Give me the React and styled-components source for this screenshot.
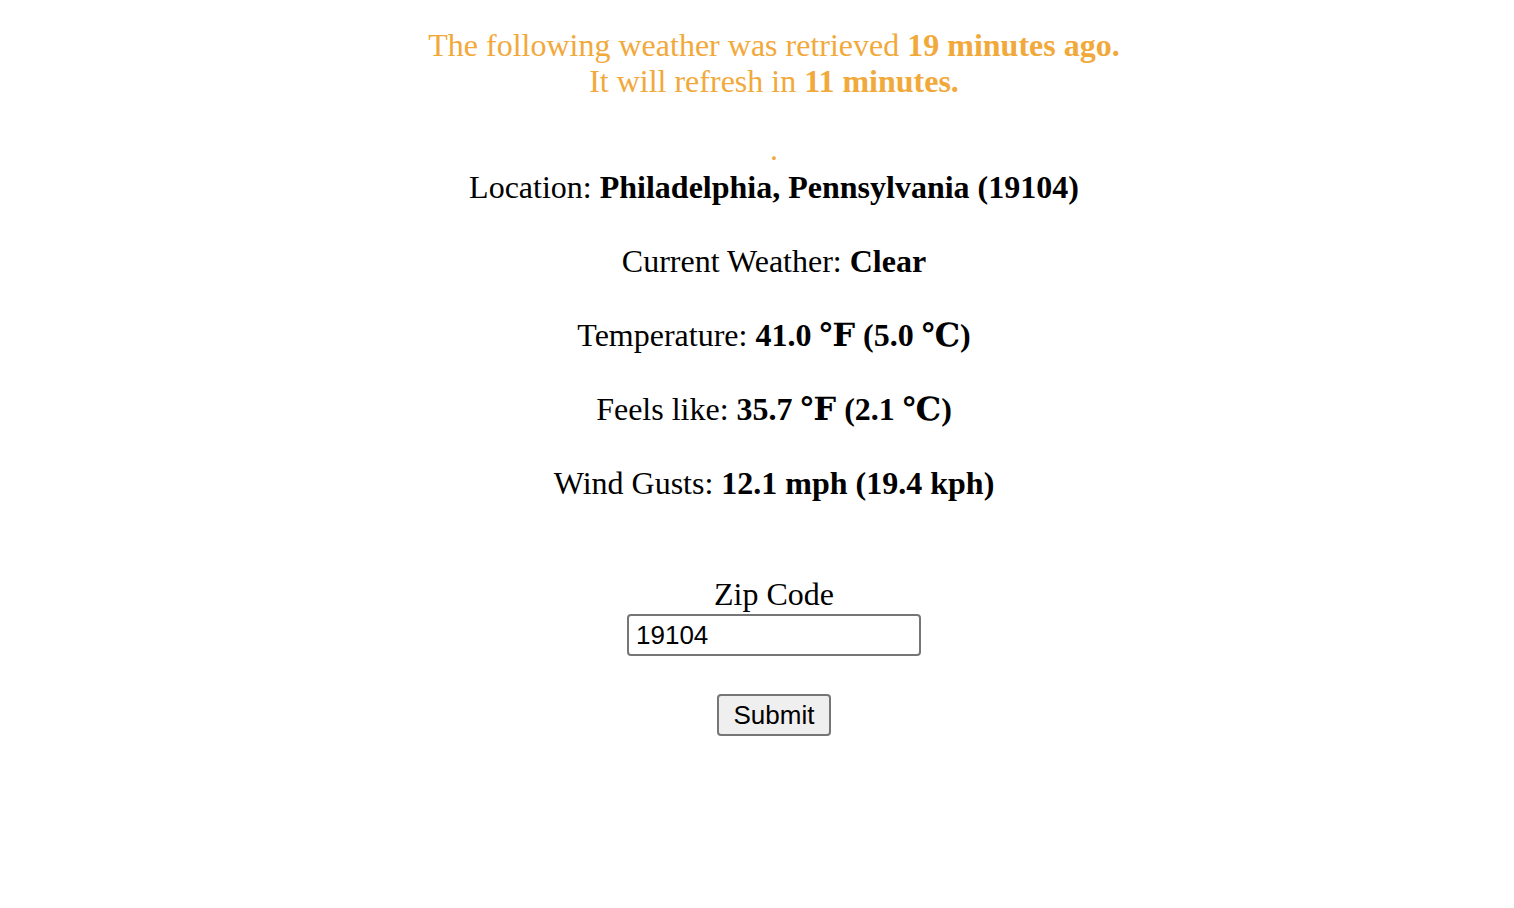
import React from 'react';
import styled, { createGlobalStyle } from 'styled-components';

const GlobalStyle = createGlobalStyle`
   body {
      margin: 0;
      background: #ffffff;
      font-family: "Liberation Serif", "DejaVu Serif", "Times New Roman", serif;
      color: #000000;
   }
`;

const Page = styled.div`
   display: flex;
   flex-direction: column;
   align-items: center;
   padding: 27px 0 0 34px;
   text-align: center;
`;

const Notice = styled.div`
   color: #f2a93b;
   font-size: 32px;
   line-height: 36px;
`;

const Dot = styled.div`
   color: #f2a93b;
   font-size: 32px;
   line-height: 36px;
   margin-top: 32px;
`;

const Details = styled.div`
   display: flex;
   flex-direction: column;
   align-items: center;
   gap: 38px;
   margin-top: 2px;
`;

const Line = styled.p`
   margin: 0;
   font-size: 32px;
   line-height: 36px;
`;

const Form = styled.form`
   display: flex;
   flex-direction: column;
   align-items: center;
   margin-top: 75px;
`;

const Label = styled.label`
   font-size: 32px;
   line-height: 36px;
`;

const Input = styled.input`
   box-sizing: border-box;
   width: 294px;
   height: 42px;
   margin-top: 2px;
   padding: 0 7px;
   font-family: "Liberation Sans", Arial, sans-serif;
   font-size: 26px;
   color: #000000;
   border: 2px solid #767676;
   border-radius: 4px;
   outline: none;
`;

const Button = styled.button`
   box-sizing: border-box;
   margin-top: 38px;
   height: 42px;
   padding: 0 15px;
   font-family: "Liberation Sans", Arial, sans-serif;
   font-size: 26px;
   color: #000000;
   background: #efefef;
   border: 2px solid #767676;
   border-radius: 4px;
`;

const rows = [
   ['Location: ', 'Philadelphia, Pennsylvania (19104)'],
   ['Current Weather: ', 'Clear'],
   ['Temperature: ', '41.0 ℉ (5.0 ℃)'],
   ['Feels like: ', '35.7 ℉ (2.1 ℃)'],
   ['Wind Gusts: ', '12.1 mph (19.4 kph)'],
];

const App = () => {
   return (
      <Page>
         <GlobalStyle />
         <Notice>
            The following weather was retrieved <b>19 minutes ago.</b>
            <br />
            It will refresh in <b>11 minutes.</b>
         </Notice>
         <Dot>.</Dot>
         <Details>
            {rows.map(([label, value]) => (
               <Line key={label}>
                  {label}
                  <b>{value}</b>
               </Line>
            ))}
         </Details>
         <Form onSubmit={(e) => e.preventDefault()}>
            <Label htmlFor="zip">Zip Code</Label>
            <Input id="zip" defaultValue="19104" />
            <Button type="submit">Submit</Button>
         </Form>
      </Page>
   );
};

export default App;
